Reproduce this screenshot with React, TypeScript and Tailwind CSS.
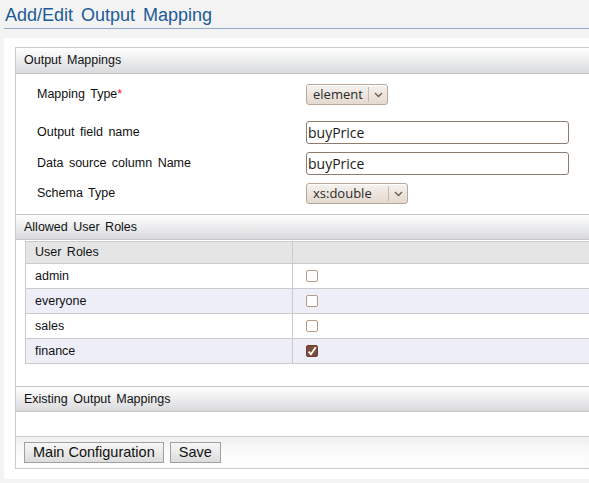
import React from "react";

const Chevron = () => (
  <svg width="9" height="6" viewBox="0 0 9 6" className="block">
    <path d="M1 1 L4.5 4.5 L8 1" fill="none" stroke="#6b5a4c" strokeWidth="1.3" />
  </svg>
);

const Select = ({ value, w }: { value: string; w: string }) => (
  <div
    className={`flex items-center h-[21px] ${w} rounded-[3px] border border-[#b9a898] bg-gradient-to-b from-[#f6f2ee] to-[#e3d9cf] shadow-[inset_0_1px_0_#fff] [word-spacing:0px]`}
    style={{ fontFamily: '"Open Sans", "DejaVu Sans", sans-serif' }}
  >
    <span className="flex-1 pl-[6px] text-[13px] text-[#2b2b2b] leading-none">{value}</span>
    <span className="h-[15px] w-px bg-[#c8b8a8]" />
    <span className="w-[18px] flex justify-center">
      <Chevron />
    </span>
  </div>
);

const Input = ({ value }: { value: string }) => (
  <div
    className="h-[23px] w-[263px] rounded-[3px] border border-[#8e7c6c] bg-white flex items-center pl-[1px] text-[14px] text-[#1a1a1a] [word-spacing:0px]"
    style={{ fontFamily: '"Open Sans", "DejaVu Sans", sans-serif' }}
  >
    {value}
  </div>
);

const Header = ({ title, top }: { title: string; top?: boolean }) => (
  <div
    className={`h-[26px] flex items-center pl-[8px] text-[12.5px] text-[#111] bg-gradient-to-b from-[#ffffff] to-[#d9dadc] border-b border-[#c6c6c6] ${
      top ? "" : "border-t"
    }`}
  >
    {title}
  </div>
);

const Checkbox = ({ checked }: { checked?: boolean }) =>
  checked ? (
    <div className="w-[12px] h-[12px] rounded-[2px] bg-[#7c4d39] border border-[#6a3f2e] flex items-center justify-center">
      <svg width="11" height="11" viewBox="0 0 11 11">
        <path d="M1.8 5.6 L4.3 8.6 L9.6 0.8" fill="none" stroke="#fff" strokeWidth="2" />
      </svg>
    </div>
  ) : (
    <div className="w-[12px] h-[12px] rounded-[2px] bg-white border border-[#b59c88]" />
  );

const roles = [
  { name: "admin", checked: false },
  { name: "everyone", checked: false },
  { name: "sales", checked: false },
  { name: "finance", checked: true },
];

const Button = ({ label }: { label: string }) => (
  <button className="h-[21px] px-[8px] border border-[#a0a0a0] bg-gradient-to-b from-[#f7f7f7] to-[#dcdcdc] text-[14.5px] text-[#111] leading-none [word-spacing:0px]">
    {label}
  </button>
);

export default function App() {
  return (
    <div
      className="w-[589px] h-[483px] overflow-hidden bg-[#f3f3f3]"
      style={{ fontFamily: '"Liberation Sans", Arial, sans-serif' }}
    >
      <div className="pl-[4px]">
        <h1 className="h-[29px] border-b border-[#93a9cb] text-[18px] text-[#1c5b97] leading-none pt-[6px] pl-[1px] [word-spacing:3px]">
          Add/Edit Output Mapping
        </h1>
        <div className="mt-[9px] w-[800px] bg-white pt-[9px] pl-[11px] pb-[10px]">
          <div className="w-[780px] border border-[#cbcbcb] text-[12.5px] text-[#111] [word-spacing:2px]">
            <Header title="Output Mappings" top />
            <div className="pl-[21px] pt-[10px] pb-[10px]">
              <div className="flex items-center h-[21px]">
                <div className="w-[269px]">
                  Mapping Type<span className="text-[#e0141a]">*</span>
                </div>
                <Select value="element" w="w-[82px]" />
              </div>
              <div className="flex items-center h-[23px] mt-[16px]">
                <div className="w-[269px]">Output field name</div>
                <Input value="buyPrice" />
              </div>
              <div className="flex items-center h-[23px] mt-[8px]">
                <div className="w-[269px]">Data source column Name</div>
                <Input value="buyPrice" />
              </div>
              <div className="flex items-center h-[21px] mt-[8px]">
                <div className="w-[269px]">Schema Type</div>
                <Select value="xs:double" w="w-[102px]" />
              </div>
            </div>
            <Header title="Allowed User Roles" />
            <div className="pl-[9px] pt-[1px] pb-[22px]">
              <table className="border-collapse w-[760px] text-[12.5px]">
                <thead>
                  <tr className="h-[22px] bg-[#e5e5e5]">
                    <th className="w-[267px] border border-[#cbcbcb] text-left font-normal pl-[9px]">User Roles</th>
                    <th className="border border-[#cbcbcb]" />
                  </tr>
                </thead>
                <tbody>
                  {roles.map((r, i) => (
                    <tr key={r.name} className={`h-[25px] ${i % 2 === 1 ? "bg-[#eeeef9]" : "bg-white"}`}>
                      <td className="border border-[#cbcbcb] pl-[9px]">{r.name}</td>
                      <td className="border border-[#cbcbcb] pl-[13px]">
                        <Checkbox checked={r.checked} />
                      </td>
                    </tr>
                  ))}
                </tbody>
              </table>
            </div>
            <Header title="Existing Output Mappings" />
            <div className="h-[24px]" />
            <div className="h-[32px] border-t border-[#cbcbcb] bg-gradient-to-b from-[#efefef] to-[#fdfdfd] via-[#fbfbfb] flex items-center gap-[6px] pl-[8px]">
              <Button label="Main Configuration" />
              <Button label="Save" />
            </div>
          </div>
        </div>
      </div>
    </div>
  );
}
